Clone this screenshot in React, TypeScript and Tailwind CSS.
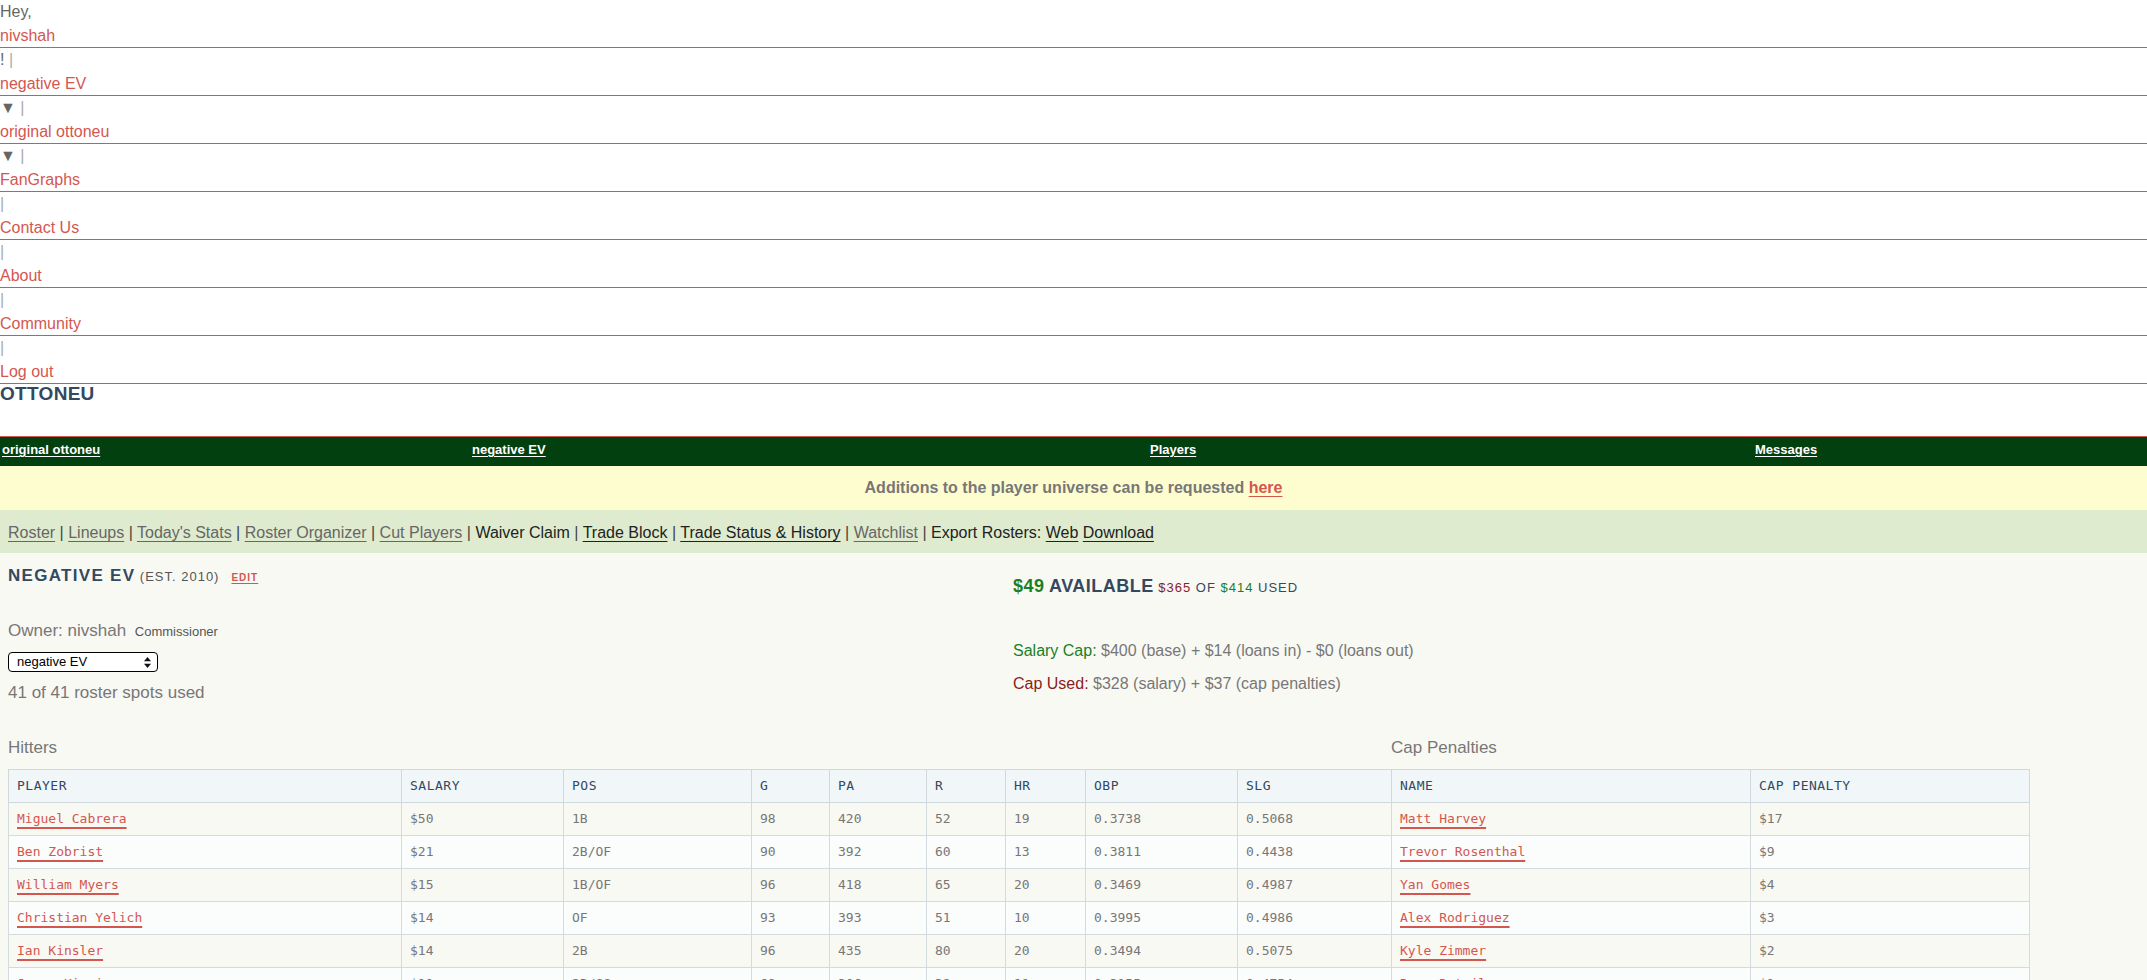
import React from "react";

const RED = "text-[#d4574f]";

const topItems: [string, string][] = [
  ["t", "Hey,"],
  ["a", "nivshah"],
  ["t", "! |"],
  ["a", "negative EV"],
  ["t", "▼ |"],
  ["a", "original ottoneu"],
  ["t", "▼ |"],
  ["a", "FanGraphs"],
  ["t", "|"],
  ["a", "Contact Us"],
  ["t", "|"],
  ["a", "About"],
  ["t", "|"],
  ["a", "Community"],
  ["t", "|"],
  ["a", "Log out"],
];

function TopLine({ text }: { text: string }) {
  if (text === "Hey,") return <div className="h-[24px] leading-[24px] text-[#666]">Hey,</div>;
  const parts = text.split("|");
  return (
    <div className="h-[24px] leading-[24px] text-[#666]">
      {parts[0].replace(/ $/, "")}
      {parts[0].length > 0 ? " " : ""}
      <span className="text-[#aaa]">|</span>
    </div>
  );
}

const hitters = [
  ["Miguel Cabrera", "$50", "1B", "98", "420", "52", "19", "0.3738", "0.5068"],
  ["Ben Zobrist", "$21", "2B/OF", "90", "392", "60", "13", "0.3811", "0.4438"],
  ["William Myers", "$15", "1B/OF", "96", "418", "65", "20", "0.3469", "0.4987"],
  ["Christian Yelich", "$14", "OF", "93", "393", "51", "10", "0.3995", "0.4986"],
  ["Ian Kinsler", "$14", "2B", "96", "435", "80", "20", "0.3494", "0.5075"],
  ["Jason Kipnis", "$11", "2B/SS", "68", "306", "38", "11", "0.3155", "0.4754"],
];

const penalties = [
  ["Matt Harvey", "$17"],
  ["Trevor Rosenthal", "$9"],
  ["Yan Gomes", "$4"],
  ["Alex Rodriguez", "$3"],
  ["Kyle Zimmer", "$2"],
  ["Ross Detwiler", "$1"],
];

const hitterCols = [
  { h: "PLAYER", w: "w-[393px]" },
  { h: "SALARY", w: "w-[162px]" },
  { h: "POS", w: "w-[188px]" },
  { h: "G", w: "w-[78px]" },
  { h: "PA", w: "w-[97px]" },
  { h: "R", w: "w-[79px]" },
  { h: "HR", w: "w-[80px]" },
  { h: "OBP", w: "w-[152px]" },
  { h: "SLG", w: "w-[154px]" },
];

const thCls =
  "h-[33px] p-0 pl-[8px] text-left font-normal text-[13px] tracking-[0.5px] text-[#34495e] bg-[#f1f6f8] border border-[#cfd8dc]";
const tdCls = "h-[33px] p-0 pl-[8px] text-left text-[13px] text-[#777] border border-[#d3dbdf]";
const linkCls =
  "text-[#d4574f] underline decoration-[2px] underline-offset-[4px] decoration-[#d4574f]";

export default function App() {
  return (
    <div className="min-h-[980px] w-[2147px] bg-[#f9f9f4] font-['Liberation_Sans',Arial,sans-serif] text-[16px] overflow-hidden">
      {/* header */}
      <div className="bg-white">
        {topItems.map(([k, t], i) =>
          k === "a" ? (
            <div key={i} className={`h-[24px] leading-[23px] border-b border-[#d4574f] ${RED}`}>
              {t}
            </div>
          ) : (
            <TopLine key={i} text={t} />
          )
        )}
        <div className="h-[52px] text-[19px] leading-[20px] font-bold text-[#34495e] tracking-[0.3px]">
          OTTONEU
        </div>
      </div>

      {/* green nav */}
      <div className="border-t border-[#d4574f] bg-[#03400f] h-[30px] grid grid-cols-[470px_678px_605px_1fr] text-[13px] font-bold text-white leading-[26px]">
        <div className="pl-[2px]">
          <span className="underline underline-offset-[2px]">original ottoneu</span>
        </div>
        <div className="pl-[2px]">
          <span className="underline underline-offset-[2px]">negative EV</span>
        </div>
        <div className="pl-[2px]">
          <span className="underline underline-offset-[2px]">Players</span>
        </div>
        <div className="pl-[2px]">
          <span className="underline underline-offset-[2px]">Messages</span>
        </div>
      </div>

      {/* yellow notice */}
      <div className="h-[44px] bg-[#fefdcf] flex items-center justify-center font-bold text-[#777] leading-[24px]">
        <span>
          Additions to the player universe can be requested{" "}
          <span className={`${RED} underline underline-offset-[3px]`}>here</span>
        </span>
      </div>

      {/* sub nav */}
      <div className="h-[43px] bg-[#dfebcf] pl-[8px] pt-[11px] leading-[24px] text-[#444]">
        <span className="text-[#666] underline underline-offset-[3px]">Roster</span> |{" "}
        <span className="text-[#666] underline underline-offset-[3px]">Lineups</span> |{" "}
        <span className="text-[#666] underline underline-offset-[3px]">Today's Stats</span> |{" "}
        <span className="text-[#666] underline underline-offset-[3px]">Roster Organizer</span> |{" "}
        <span className="text-[#666] underline underline-offset-[3px]">Cut Players</span> |{" "}
        <span className="text-[#222]">Waiver Claim</span> |{" "}
        <span className="text-[#222] underline underline-offset-[3px]">Trade Block</span> |{" "}
        <span className="text-[#222] underline underline-offset-[3px]">Trade Status &amp; History</span> |{" "}
        <span className="text-[#666] underline underline-offset-[3px]">Watchlist</span> |{" "}
        <span className="text-[#222]">Export Rosters: </span>
        <span className="text-[#222] underline underline-offset-[3px]">Web</span>{" "}
        <span className="text-[#222] underline underline-offset-[3px]">Download</span>
      </div>

      {/* team info */}
      <div className="flex">
        <div className="w-[1013px] pl-[8px] pt-[11px]">
          <div className="leading-[24px] whitespace-nowrap">
            <span className="text-[17px] font-bold tracking-[1.3px] text-[#34495e]">NEGATIVE EV</span>{" "}
            <span className="text-[13px] tracking-[1px] text-[#555]">(EST. 2010)</span>
            <span className="ml-[12px] text-[10px] font-bold tracking-[1px] text-[#d4574f] underline underline-offset-[2px]">
              EDIT
            </span>
          </div>
          <div className="mt-[29px] leading-[24px] text-[17px] text-[#777]">
            Owner: nivshah <span className="ml-[4px] text-[13px] text-[#555]">Commissioner</span>
          </div>
          <div className="mt-[8px] relative w-[150px] h-[20px] rounded-[4px] border border-black bg-white text-[13px] leading-[18px] text-black pl-[8px]">
            negative EV
            <svg className="absolute right-[6px] top-[4px]" width="7" height="11" viewBox="0 0 7 11">
              <path d="M3.5 0 L7 4.2 L0 4.2 Z" fill="#111" />
              <path d="M3.5 11 L7 6.8 L0 6.8 Z" fill="#111" />
            </svg>
          </div>
          <div className="mt-[9px] leading-[24px] text-[17px] text-[#777]">41 of 41 roster spots used</div>
        </div>
        <div className="pt-[21px]">
          <div className="leading-[24px] whitespace-nowrap">
            <span className="text-[18px] font-bold tracking-[0.5px] text-[#1b7f25]">$49</span>{" "}
            <span className="text-[18px] font-bold tracking-[0.5px] text-[#34495e]">AVAILABLE</span>{" "}
            <span className="text-[13px] tracking-[1px]">
              <span className="text-[#8b1c1c]">$365</span> <span className="text-[#34495e]">OF</span>{" "}
              <span className="text-[#1b7f25]">$414</span> <span className="text-[#34495e]">USED</span>
            </span>
          </div>
          <div className="mt-[39px] leading-[24px] text-[#777]">
            <span className="text-[#1b7f25]">Salary Cap:</span> $400 (base) + $14 (loans in) - $0 (loans out)
          </div>
          <div className="mt-[9px] leading-[24px] text-[#777]">
            <span className="text-[#8b1c1c]">Cap Used:</span> $328 (salary) + $37 (cap penalties)
          </div>
        </div>
      </div>

      {/* tables */}
      <div className="flex pl-[8px] mt-[31px]">
        <div className="w-[1383px]">
          <div className="leading-[24px] text-[17px] text-[#777] mb-[9px]">Hitters</div>
          <table className="w-[1383px] table-fixed border-collapse font-['DejaVu_Sans_Mono',monospace]">
            <thead>
              <tr>
                {hitterCols.map((c) => (
                  <th key={c.h} className={`${thCls} ${c.w}`}>
                    {c.h}
                  </th>
                ))}
              </tr>
            </thead>
            <tbody>
              {hitters.map((r, i) => (
                <tr key={i} className={i % 2 === 1 ? "bg-[#fbfcfc]" : ""}>
                  {r.map((v, j) => (
                    <td key={j} className={tdCls}>
                      {j === 0 ? <span className={linkCls}>{v}</span> : v}
                    </td>
                  ))}
                </tr>
              ))}
            </tbody>
          </table>
        </div>
        <div className="w-[638px]">
          <div className="leading-[24px] text-[17px] text-[#777] mb-[9px]">Cap Penalties</div>
          <table className="w-[638px] table-fixed border-collapse font-['DejaVu_Sans_Mono',monospace]">
            <thead>
              <tr>
                <th className={`${thCls} w-[359px]`}>NAME</th>
                <th className={`${thCls} w-[279px]`}>CAP PENALTY</th>
              </tr>
            </thead>
            <tbody>
              {penalties.map((r, i) => (
                <tr key={i} className={i % 2 === 1 ? "bg-[#fbfcfc]" : ""}>
                  <td className={tdCls}>
                    <span className={linkCls}>{r[0]}</span>
                  </td>
                  <td className={tdCls}>{r[1]}</td>
                </tr>
              ))}
            </tbody>
          </table>
        </div>
      </div>
    </div>
  );
}
